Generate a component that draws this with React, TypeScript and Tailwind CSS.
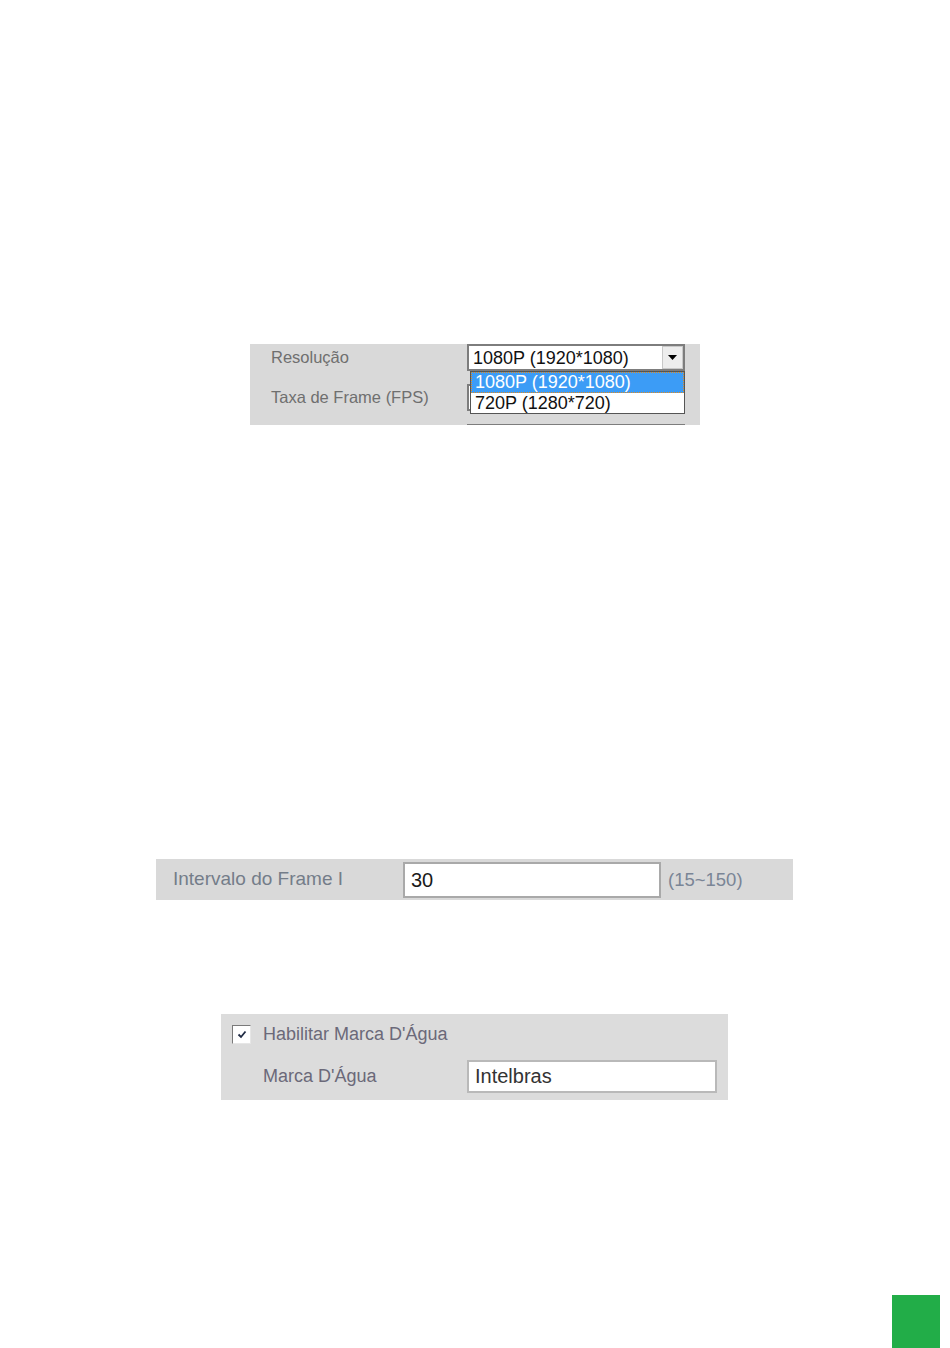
import React from 'react';

const font = { fontFamily: '"Liberation Sans", Arial, sans-serif' };

const SelectBox: React.FC<{ value?: string; withArrow?: boolean }> = ({ value, withArrow }) => (
  <div className="relative h-[27px] w-[218px] border-2 border-[#7d7d7d] bg-white">
    {value && (
      <div className="pl-[4px] pt-px text-[18px] leading-[23px] text-[#111]">{value}</div>
    )}
    {withArrow && (
      <div className="absolute right-0 top-0 flex h-[23px] w-[21px] items-center justify-center border border-[#c8c8c8] bg-[#ededed]">
        <svg width="9" height="5" viewBox="0 0 9 5">
          <path d="M0 0 H9 L4.5 5 Z" fill="#000" />
        </svg>
      </div>
    )}
  </div>
);

const ResolutionPanel: React.FC = () => (
  <div className="ml-[250px] h-[81px] w-[450px] overflow-hidden bg-[#d9d9d9]">
    <div className="flex flex-col gap-[13px]">
      <div className="relative flex h-[27px] items-start">
        <div className="w-[217px] pl-[21px] text-[16.5px] leading-[27px] text-[#6f6f6f]">Resolução</div>
        <SelectBox value="1080P (1920*1080)" withArrow />
        <div className="absolute left-[220px] top-[27px] z-10 w-[215px] border border-[#555] bg-white text-[18px] leading-[21px]">
          <div className="h-[21px] border border-dotted border-[#e08a1e] bg-[#3c9cf6] pl-[3px] leading-[19px] text-white">
            1080P (1920*1080)
          </div>
          <div className="h-[20px] pl-[4px] leading-[20px] text-[#111]">720P (1280*720)</div>
        </div>
      </div>
      <div className="flex h-[27px] items-start">
        <div className="w-[217px] pl-[21px] text-[16.5px] leading-[27px] text-[#6f6f6f]">Taxa de Frame (FPS)</div>
        <SelectBox />
      </div>
      <div className="flex h-[27px] items-start">
        <div className="w-[217px]" />
        <SelectBox />
      </div>
    </div>
  </div>
);

const IntervalPanel: React.FC = () => (
  <div className="mt-[434px] ml-[156px] flex h-[41px] w-[637px] items-center bg-[#d9d9d9]">
    <div className="w-[247px] pl-[17px] text-[19px] text-[#747d89]">Intervalo do Frame I</div>
    <div className="h-[36px] w-[258px] border-2 border-[#a9a9a9] bg-white pl-[6px] text-[20px] leading-[32px] text-[#1a1a1a]">
      30
    </div>
    <div className="pl-[7px] text-[18.5px] text-[#7a8596]">(15~150)</div>
  </div>
);

const WatermarkPanel: React.FC = () => (
  <div className="mt-[114px] ml-[221px] flex h-[86px] w-[507px] flex-col bg-[#dcdcdc] pl-[11px] pt-[11px]">
    <div className="flex items-center">
      <div className="flex h-[19px] w-[19px] items-center justify-center border border-t-[#7a7a7a] border-l-[#7a7a7a] border-b-[#e6e6e6] border-r-[#e6e6e6] bg-white">
        <svg width="10" height="9" viewBox="0 0 10 9">
          <path d="M1.5 4.5 L4 7 L8.5 1.5" stroke="#1f2a44" strokeWidth="1.8" fill="none" />
        </svg>
      </div>
      <div className="pl-[12px] text-[18px] leading-[19px] text-[#6b6979]">Habilitar Marca D'Água</div>
    </div>
    <div className="mt-[16px] flex items-center">
      <div className="w-[235px] pl-[31px] text-[18px] text-[#6b6979]">Marca D'Água</div>
      <div className="h-[33px] w-[250px] border-2 border-[#b9b9b9] bg-white pl-[6px] text-[20px] leading-[29px] text-[#333]">
        Intelbras
      </div>
    </div>
  </div>
);

const App: React.FC = () => {
  return (
    <div className="h-[1348px] w-[950px] overflow-hidden bg-white pt-[344px]" style={font}>
      <ResolutionPanel />
      <IntervalPanel />
      <WatermarkPanel />
      <div className="mt-[195px] ml-[892px] h-[53px] w-[48px] bg-[#22ad48]" />
    </div>
  );
};

export default App;
